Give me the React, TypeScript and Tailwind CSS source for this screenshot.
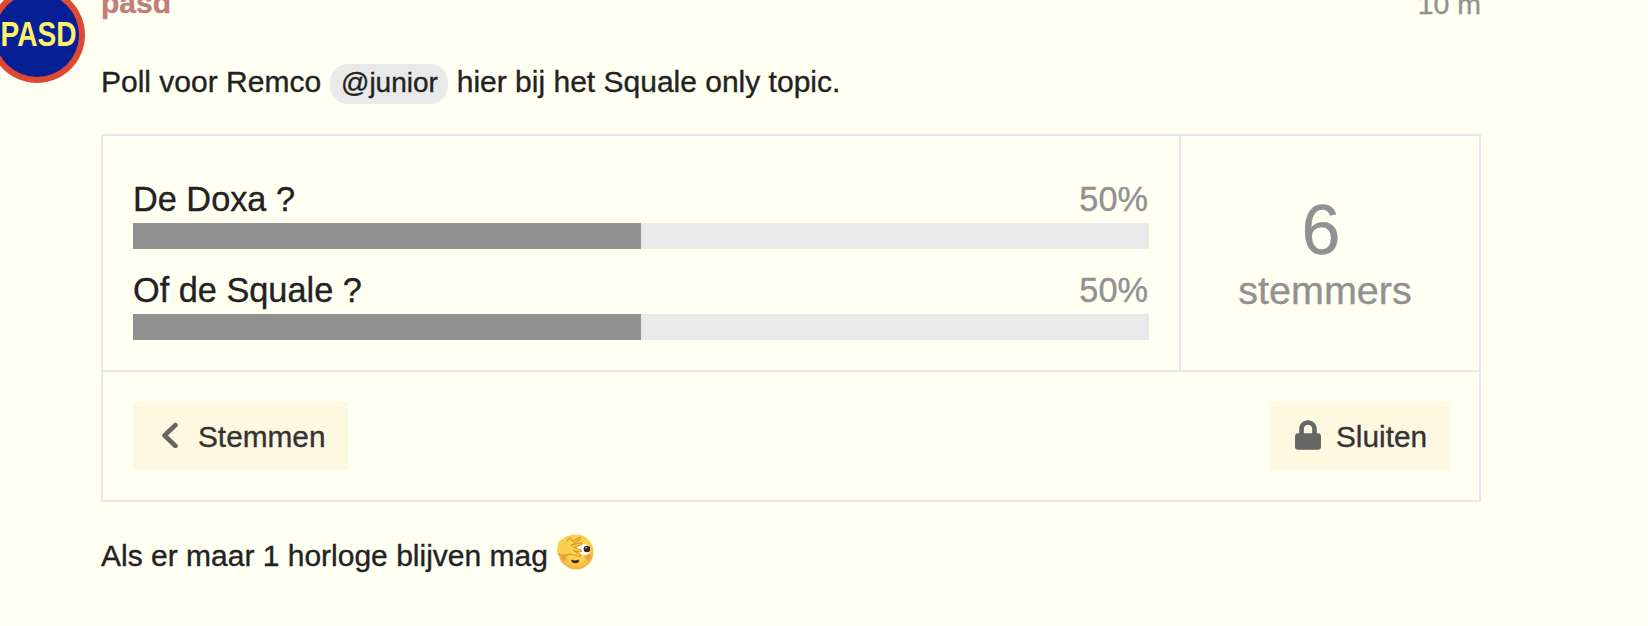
import React from "react";

const options = [
  { title: "De Doxa ?", percent: 50 },
  { title: "Of de Squale ?", percent: 50 },
];

function Avatar() {
  return (
    <svg className="-ml-[11px] -mt-[13px] h-24 w-24 shrink-0" viewBox="0 0 96 96">
      <circle cx="48" cy="48" r="48" fill="#de4a31" />
      <circle cx="48" cy="48" r="42" fill="#071f94" />
      <text
        x="11.5"
        y="58.5"
        fill="#fff16b"
        fontFamily="Liberation Sans, Arial, sans-serif"
        fontSize="35"
        fontWeight="bold"
        textLength="76"
        lengthAdjust="spacingAndGlyphs"
      >
        PASD
      </text>
    </svg>
  );
}

function PeekingFace() {
  return (
    <svg className="mt-[4px] ml-[8px] h-[36px] w-[38px]" viewBox="0 0 38 36">
      <defs>
        <radialGradient id="face" cx="0.5" cy="0.4" r="0.6">
          <stop offset="0" stopColor="#fde055" />
          <stop offset="0.65" stopColor="#fbd04c" />
          <stop offset="1" stopColor="#f0b040" />
        </radialGradient>
        <radialGradient id="blush">
          <stop offset="0" stopColor="#f0804a" stopOpacity="0.8" />
          <stop offset="1" stopColor="#f0804a" stopOpacity="0" />
        </radialGradient>
      </defs>
      <circle cx="20" cy="18" r="17.5" fill="url(#face)" />
      <path d="M2 9Q5 5 12 2L22 8 15 21 8 23Q2 23 1 17Z" fill="#fbce4b" />
      <circle cx="8" cy="24" r="5" fill="url(#blush)" />
      <circle cx="32" cy="23" r="5" fill="url(#blush)" />
      <ellipse cx="28" cy="15.5" rx="6.5" ry="5.5" fill="#fff" />
      <circle cx="31" cy="15" r="3.3" fill="#3b2515" />
      <circle cx="30" cy="13.8" r="0.8" fill="#fff" />
      {/* fingers held in front of the left eye */}
      <path
        d="M12 6 14 3.5 19 7 25 3Q27 3 25 5L19 10 26 9Q28 10 25 11L18 14 25 16Q27 18 24 18L18 17 26 21Q26 23 23 22L14 20Z"
        fill="#fcd34f"
      />
      <path
        d="M2 20Q7 23 14 20L23 22.500Q26 22 24 20.500L17.500 16.500 24 18Q27 17 24 15.500L17.500 13.500 25.500 10.500Q27 8.500 24 9L15 11.500 24.500 5Q26 2.500 23 3.500L17 7.500 14 3.500 11 7"
        fill="none"
        stroke="#dd9430"
        strokeWidth="1.1"
        strokeLinejoin="round"
        strokeLinecap="round"
      />
      <path d="M15.500 26q4 1.500 7.500 0 0 3-3.700 3t-3.800-3" fill="#3b2515" stroke="#3b2515" strokeWidth="0.6" />
    </svg>
  );
}

function Poll() {
  return (
    <div className="mt-[30px] h-[368px] w-[1380px] border-2 border-[#e8e8ec]">
      <div className="flex h-[236px] border-b-2 border-[#e8e8ec]">
        <ul className="w-[1078px] border-r-2 border-[#e8e8ec] px-[30px] pt-[44px]">
          {options.map((option) => (
            <li key={option.title} className="mb-[22px]">
              <div className="flex h-[43px] justify-between text-[34.3px] leading-[39px]">
                <span>{option.title}</span>
                <span className="mr-px text-[#919191]">{option.percent}%</span>
              </div>
              <div className="h-[26px] bg-[#e9e9e9]">
                <div className="h-full bg-[#919191]" style={{ width: `${option.percent}%` }} />
              </div>
            </li>
          ))}
        </ul>
        <div className="flex-1 pt-[54px] text-center text-[#919191]">
          <div className="mr-[18px] text-[70px] leading-[80px]">6</div>
          <div className="-mt-[2px] mr-[10px] text-[39.5px] leading-[45px]">stemmers</div>
        </div>
      </div>
      <div className="flex justify-between px-[30px] pt-[30px] text-[#333]">
        <button className="flex h-[68px] w-[215px] items-center bg-[#fdf8df] pl-[28px]">
          <svg className="mb-[3px] h-[26px] w-[18px]" viewBox="0 0 18 26" fill="none">
            <path d="M14.500 3 3.500 13.500l11 10.500" stroke="#666" strokeWidth="4.500" strokeLinecap="round" strokeLinejoin="round" />
          </svg>
          <span className="ml-[19px] pt-[2px] text-[29.8px]">Stemmen</span>
        </button>
        <button className="flex h-[68px] w-[178px] items-center bg-[#fdf8df] pl-[24px]">
          <svg className="mb-[3px] h-[30px] w-[26px]" viewBox="0 0 448 512">
            <path
              d="M400 224h-24v-72C376 68.200 307.800 0 224 0S72 68.200 72 152v72H48c-26.500 0-48 21.500-48 48v192c0 26.500 21.500 48 48 48h352c26.500 0 48-21.500 48-48V272c0-26.500-21.500-48-48-48zm-104 0H152v-72c0-39.700 32.300-72 72-72s72 32.300 72 72v72z"
              fill="#666"
            />
          </svg>
          <span className="ml-[15px] pt-[2px] text-[29.8px]">Sluiten</span>
        </button>
      </div>
    </div>
  );
}

export default function App() {
  return (
    <div className="flex h-[626px] w-[1648px] overflow-hidden bg-[#fffff2] font-['Liberation_Sans',Arial,sans-serif] text-[30px] leading-[34px] text-[#222] [-webkit-text-stroke:0.35px]">
      <Avatar />
      <div className="ml-[16px] w-[1380px]">
        <div className="-mt-[14px] flex h-[34px] justify-between">
          <span className="font-bold text-[#c37d77]">pasd</span>
          <span className="text-[28.5px] leading-[36px] text-[#919191]">10 m</span>
        </div>
        <p className="mt-[44px] flex h-10 whitespace-pre">
          <span className="pt-px">Poll voor Remco </span>
          <a className="ml-px h-10 w-[118px] rounded-[18px] bg-[#e9e9e9] text-center text-[28px] leading-[38px]">@junior</a>
          <span className="pt-px"> hier bij het Squale only topic.</span>
        </p>
        <Poll />
        <div className="mt-[28px] flex h-[44px]">
          <p className="pt-[9px]">Als er maar 1 horloge blijven mag</p>
          <PeekingFace />
        </div>
      </div>
    </div>
  );
}
